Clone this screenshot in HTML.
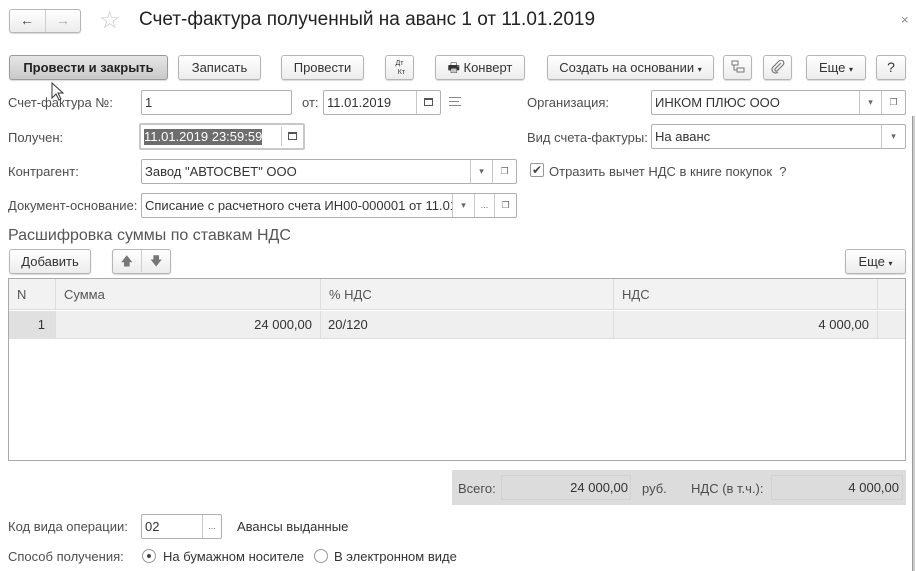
<!DOCTYPE html>
<html><head><meta charset="utf-8"><style>
*{box-sizing:border-box;margin:0;padding:0}
body{width:916px;height:571px;background:#fff;font-family:"Liberation Sans",Arial,sans-serif;font-size:13px;color:#404040;position:relative;overflow:hidden}
.a{position:absolute;white-space:nowrap}
.btn{position:absolute;height:25px;border:1px solid #b5b5b5;border-radius:3px;background:linear-gradient(#fff,#ececec);box-shadow:0 1px 1px rgba(0,0,0,.15);text-align:center;line-height:23px;color:#333;font-size:13px}
.inp{position:absolute;height:25px;border:1px solid #b0b0b0;border-radius:2px;background:#fff;line-height:23px;padding-left:3px;color:#333;font-size:13px}
.lbl{position:absolute;color:#4d4d4d;font-size:13px;line-height:15px}
.sb{position:absolute;top:0;bottom:0;border-left:1px solid #c8c8c8;text-align:center;color:#666;font-size:9px;line-height:23px}
.cal{position:absolute;top:7px;width:9px;height:8px;border:1px solid #555;border-top-width:2px}
.th{position:absolute;top:0;height:31px;border-right:1px solid #ddd;line-height:31px;padding-left:8px;color:#555}
.td{position:absolute;top:0;height:28px;border-right:1px solid #ddd;line-height:28px;color:#333}
</style></head><body>

<div class="btn" style="left:9px;top:9px;width:72px;height:24px"></div>
<div class="a" style="left:45px;top:10px;width:1px;height:22px;background:#d0d0d0"></div>
<div class="a" style="left:20px;top:12px;font-size:14px;color:#444;font-weight:bold">&#8592;</div>
<div class="a" style="left:56px;top:12px;font-size:14px;color:#aaa;font-weight:bold">&#8594;</div>
<div class="a" style="left:99px;top:6px;font-size:24px;color:#c8c8c8">&#9734;</div>
<div class="a" style="left:139px;top:9px;font-size:19px;color:#222">Счет-фактура полученный на аванс 1 от 11.01.2019</div>
<div class="a" style="left:901px;top:12px;font-size:13px;color:#888">×</div>

<div class="btn" style="left:9px;top:55px;width:159px;background:linear-gradient(#e6e6e6,#c9c9c9);border-color:#9a9a9a;font-weight:bold;color:#222">Провести и закрыть</div>
<div class="btn" style="left:178px;top:55px;width:83px">Записать</div>
<div class="btn" style="left:281px;top:55px;width:83px">Провести</div>
<div class="btn" style="left:385px;top:55px;width:29px;font-size:7px;line-height:9px;padding-top:3px">Дт<br>&nbsp;&nbsp;Кт</div>
<div class="btn" style="left:435px;top:55px;width:90px">&#128438; Конверт</div>
<div class="btn" style="left:547px;top:55px;width:167px">Создать на основании <span style="font-size:8px">▾</span></div>
<div class="btn" style="left:723px;top:55px;width:29px"><svg width="14" height="14" viewBox="0 0 14 14" style="margin-top:4px"><rect x="1" y="1" width="6" height="4" fill="none" stroke="#777"/><rect x="6" y="8" width="7" height="4" fill="none" stroke="#777"/><path d="M3 5v5h3" fill="none" stroke="#777"/></svg></div>
<div class="btn" style="left:763px;top:55px;width:29px"><svg width="14" height="14" viewBox="0 0 14 14" style="margin-top:4px"><path d="M10 3 L4 9 a1.5 1.5 0 0 0 2 2 L12 5 a2.5 2.5 0 0 0 -4 -4 L2 7 a3.5 3.5 0 0 0 5 5" fill="none" stroke="#777" stroke-width="1.2"/></svg></div>
<div class="btn" style="left:806px;top:55px;width:60px">Еще <span style="font-size:8px">▾</span></div>
<div class="btn" style="left:876px;top:55px;width:30px;font-size:14px">?</div>

<div class="lbl" style="left:8px;top:95px">Счет-фактура №:</div>
<div class="inp" style="left:141px;top:90px;width:151px">1</div>
<div class="lbl" style="left:302px;top:95px">от:</div>
<div class="inp" style="left:323px;top:90px;width:118px">11.01.2019<div class="sb" style="left:92px;width:24px"><div class="cal" style="left:7px"></div></div></div>
<div class="a" style="left:449px;top:97px;width:12px;height:9px;border-top:1px solid #888;border-bottom:1px solid #888"><div style="margin-top:3px;border-top:1px solid #888;width:10px"></div></div>
<div class="lbl" style="left:527px;top:95px">Организация:</div>
<div class="inp" style="left:651px;top:90px;width:255px">ИНКОМ ПЛЮС ООО<div class="sb" style="left:207px;width:22px">▾</div><div class="sb" style="left:229px;width:24px">&#10064;</div></div>

<div class="lbl" style="left:8px;top:130px">Получен:</div>
<div class="inp" style="left:139px;top:123px;width:166px;height:27px;border:2px solid #c8c8c8;padding-left:3px"><span style="background:#6d6d6d;color:#fff;line-height:16px;display:inline-block;margin-top:3px">11.01.2019 23:59:59</span><div class="sb" style="left:140px;width:22px;top:2px;bottom:2px"><div class="cal" style="left:6px;top:5px"></div></div></div>
<div class="lbl" style="left:527px;top:130px">Вид счета-фактуры:</div>
<div class="inp" style="left:651px;top:124px;width:255px">На аванс<div class="sb" style="left:229px;width:24px">▾</div></div>

<div class="lbl" style="left:8px;top:164px">Контрагент:</div>
<div class="inp" style="left:141px;top:159px;width:376px">Завод "АВТОСВЕТ" ООО<div class="sb" style="left:328px;width:22px">▾</div><div class="sb" style="left:350px;width:24px">&#10064;</div></div>
<div class="a" style="left:530px;top:163px;width:14px;height:14px;border:1px solid #999;border-radius:2px;background:#fff;color:#444;font-size:12px;line-height:12px;text-align:center">&#10004;</div>
<div class="lbl" style="left:549px;top:164px">Отразить вычет НДС в книге покупок&nbsp; ?</div>

<div class="lbl" style="left:8px;top:198px">Документ-основание:</div>
<div class="inp" style="left:141px;top:193px;width:376px;overflow:hidden">Списание с расчетного счета ИН00-000001 от 11.01<div class="sb" style="left:310px;width:22px;background:#fff">▾</div><div class="sb" style="left:332px;width:20px">...</div><div class="sb" style="left:352px;width:22px">&#10064;</div></div>

<div class="a" style="left:8px;top:227px;font-size:16px;color:#555">Расшифровка суммы по ставкам НДС</div>
<div class="btn" style="left:9px;top:249px;width:82px">Добавить</div>
<div class="btn" style="left:112px;top:249px;width:59px;font-size:12px;color:#777">&#129093;<span style="display:inline-block;width:1px;height:22px;background:#d0d0d0;vertical-align:top;margin:0 8px"></span>&#129095;</div>
<div class="btn" style="left:845px;top:249px;width:61px">Еще <span style="font-size:8px">▾</span></div>

<div class="a" style="left:8px;top:278px;width:898px;height:183px;border:1px solid #aaa;background:#fff">
 <div class="a" style="left:0;top:0;width:896px;height:31px;background:#f2f2f2;border-bottom:1px solid #ddd">
  <div class="th" style="left:0;width:47px">N</div>
  <div class="th" style="left:47px;width:265px">Сумма</div>
  <div class="th" style="left:312px;width:293px">% НДС</div>
  <div class="th" style="left:605px;width:264px">НДС</div>
 </div>
 <div class="a" style="left:0;top:32px;width:896px;height:28px;background:#efefef;border-bottom:1px solid #ddd">
  <div class="td" style="left:0;width:47px;background:#e0e0e0;text-align:right;padding-right:10px">1</div>
  <div class="td" style="left:47px;width:265px;text-align:right;padding-right:8px">24 000,00</div>
  <div class="td" style="left:312px;width:293px;padding-left:7px">20/120</div>
  <div class="td" style="left:605px;width:264px;text-align:right;padding-right:8px">4 000,00</div>
 </div>
</div>

<div class="a" style="left:452px;top:470px;width:454px;height:35px;background:#dcdcdc">
 <div class="lbl" style="left:6px;top:11px">Всего:</div>
 <div class="a" style="left:49px;top:5px;width:130px;height:25px;border:1px solid #d2d2d2;text-align:right;line-height:23px;padding-right:2px;color:#333">24 000,00</div>
 <div class="lbl" style="left:190px;top:11px">руб.</div>
 <div class="lbl" style="left:239px;top:11px">НДС (в т.ч.):</div>
 <div class="a" style="left:319px;top:5px;width:132px;height:25px;border:1px solid #d2d2d2;text-align:right;line-height:23px;padding-right:3px;color:#333">4 000,00</div>
</div>

<div class="lbl" style="left:8px;top:519px">Код вида операции:</div>
<div class="inp" style="left:141px;top:514px;width:81px">02<div class="sb" style="left:60px;width:19px">...</div></div>
<div class="lbl" style="left:237px;top:519px;color:#333">Авансы выданные</div>
<div class="lbl" style="left:8px;top:549px">Способ получения:</div>
<div class="a" style="left:142px;top:549px;width:14px;height:14px;border:1px solid #999;border-radius:50%"><div style="width:4px;height:4px;background:#444;border-radius:50%;margin:4px"></div></div>
<div class="lbl" style="left:163px;top:549px;color:#333">На бумажном носителе</div>
<div class="a" style="left:314px;top:549px;width:14px;height:14px;border:1px solid #999;border-radius:50%"></div>
<div class="lbl" style="left:334px;top:549px;color:#333">В электронном виде</div>

<div class="a" style="left:912px;top:116px;width:3px;height:455px;background:#ccc;border-left:1px solid #999"></div>

<svg class="a" style="left:51px;top:82px" width="14" height="20" viewBox="0 0 14 20"><path d="M1 1 L1 16 L5 12 L8 18 L10 17 L7 11 L12 11 Z" fill="#fff" stroke="#333" stroke-width="1"/></svg>
</body></html>
